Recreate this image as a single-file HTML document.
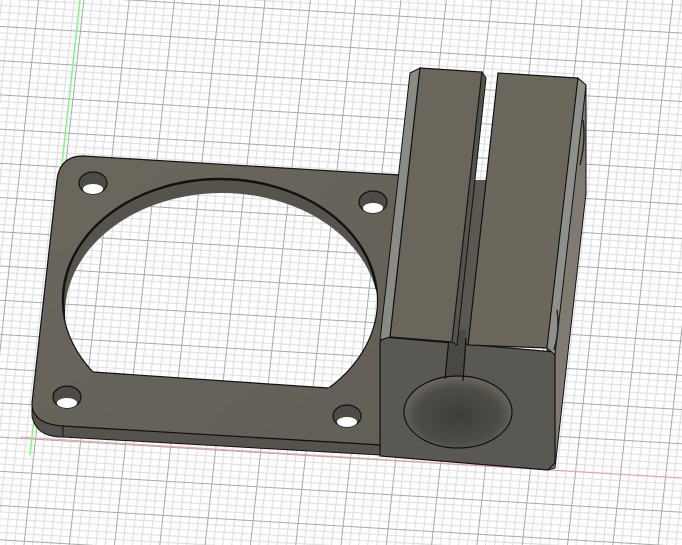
<!DOCTYPE html>
<html><head><style>html,body{margin:0;padding:0;background:#fff;width:682px;height:545px;overflow:hidden}</style></head>
<body>
<svg width="682" height="545" viewBox="0 0 682 545" xmlns="http://www.w3.org/2000/svg">
<defs>
<pattern id="g" width="45" height="34" patternUnits="userSpaceOnUse" patternTransform="matrix(1,0.06,-0.11,1,35,28)">
<rect width="45" height="34" fill="#fff"/>
<g stroke="#dcdcdc" stroke-width="1">
<line x1="9" y1="0" x2="9" y2="34"/><line x1="18" y1="0" x2="18" y2="34"/><line x1="27" y1="0" x2="27" y2="34"/><line x1="36" y1="0" x2="36" y2="34"/>
<line x1="0" y1="6.8" x2="45" y2="6.8"/><line x1="0" y1="13.6" x2="45" y2="13.6"/><line x1="0" y1="20.4" x2="45" y2="20.4"/><line x1="0" y1="27.2" x2="45" y2="27.2"/>
</g>
<g stroke="#a8a8a8" stroke-width="1"><line x1="0.5" y1="0" x2="0.5" y2="34"/><line x1="0" y1="0.5" x2="45" y2="0.5"/></g>
</pattern>
<radialGradient id="bore" cx="0.5" cy="0.55" r="0.6"><stop offset="0" stop-color="#3f3d39"/><stop offset="0.65" stop-color="#4e4c47"/><stop offset="1" stop-color="#77746c"/></radialGradient>
<linearGradient id="top" x1="0" y1="0" x2="1" y2="1"><stop offset="0" stop-color="#6b675d"/><stop offset="1" stop-color="#625f58"/></linearGradient>
<clipPath id="cut"><polygon points="0,0 682,0 682,412 0,365.7"/></clipPath>
<clipPath id="hc"><ellipse cx="220" cy="300" rx="157" ry="121"/></clipPath>
</defs>
<rect width="682" height="545" fill="url(#g)"/>
<line x1="80" y1="0" x2="30" y2="455" stroke="#7dfa7d" stroke-width="1.5"/>
<line x1="20" y1="437" x2="682" y2="478" stroke="#f5a0a0" stroke-width="1"/>
<!-- plate side -->
<path d="M32,403 L32,416 Q36,437 63,437 L380,455 L380,445 L63,426 Q34,424 32,403 Z" fill="#56534e" stroke="#111" stroke-width="1"/>
<line x1="63" y1="426" x2="63" y2="437" stroke="#111"/>
<!-- plate top -->
<path d="M83,156 L400,175 L382,445 L63,426 Q32,424 32,403 L57,180 Q60,156 83,156 Z" fill="url(#top)" stroke="#111" stroke-width="1.2"/>
<!-- big hole -->
<g clip-path="url(#cut)">
<ellipse cx="220" cy="300" rx="157" ry="121" fill="#56534d" stroke="#111" stroke-width="2.4"/>
<g clip-path="url(#hc)"><ellipse cx="222" cy="314" rx="157" ry="121" fill="url(#g)"/></g>
</g>
<line x1="93" y1="372" x2="328" y2="388" stroke="#111" stroke-width="1.2"/>
<!-- small holes -->
<g stroke="#111" stroke-width="1.2">
<ellipse cx="93" cy="183" rx="14" ry="11" fill="#4e4b46"/><ellipse cx="373" cy="202" rx="14" ry="11" fill="#4e4b46"/>
<ellipse cx="67" cy="397" rx="14" ry="11" fill="#4e4b46"/><ellipse cx="347" cy="416" rx="14" ry="11" fill="#4e4b46"/>
</g>
<g fill="#fff"><ellipse cx="93" cy="189" rx="10" ry="5"/><ellipse cx="373" cy="208" rx="10" ry="5"/><ellipse cx="67" cy="403" rx="10" ry="5"/><ellipse cx="347" cy="422" rx="10" ry="5"/></g>
<!-- back block between pillars -->
<path d="M470,180 L495,180 L470,350 L450,350 Z" fill="#5b5852"/>
<!-- right side face -->
<path d="M586,85 L586,193 L555,468 L548,470 L547,348 Z" fill="#7f7b72" stroke="#111" stroke-width="1"/>
<!-- block front face -->
<path d="M384,337 L555,352 L555,463 L548,470 L380,456 L380,342 Z" fill="#5a5852" stroke="#111" stroke-width="1.2"/>
<!-- bore -->
<path d="M445,381 L450,330 L466,330 L463,381 Z" fill="#4a4843"/>
<ellipse cx="458" cy="412" rx="54" ry="36" fill="url(#bore)" stroke="#111" stroke-width="1.2"/>
<path d="M445,379 L449,338 M463,381 L466,338" stroke="#111" stroke-width="1.2" fill="none"/>
<!-- left pillar -->
<path d="M410,73 L420,68 L390,337 L380,340 Z" fill="#8a8b85" stroke="#111" stroke-width="1"/>
<path d="M420,68 L482,72 L452,342 L390,337 Z" fill="#6a665c" stroke="#111" stroke-width="1.2"/>
<path d="M482,72 L486,78 L457,345 L452,342 Z" fill="#55534e" stroke="#111" stroke-width="1"/>
<!-- right pillar -->
<path d="M498,73 L578,78 L547,348 L468,345 Z" fill="#6b675d" stroke="#111" stroke-width="1.2"/>
<path d="M578,78 L586,85 L555,355 L547,348 Z" fill="#8e918b" stroke="#111" stroke-width="1"/>
<path d="M583,120 Q586,140 580,165 M557,310 Q560,330 554,350" stroke="#222" fill="none" stroke-width="1.5"/>
</svg>
</body></html>
